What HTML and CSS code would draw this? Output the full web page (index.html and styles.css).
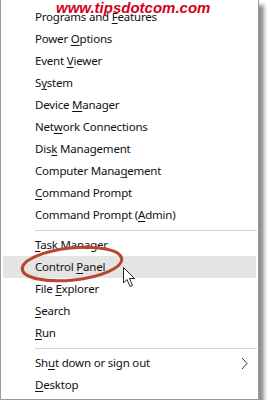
FILE: index.html
```html
<!DOCTYPE html>
<html lang="en">
<head>
  <meta charset="UTF-8">
  <title>Quick Link Menu</title>
  <link rel="stylesheet" href="styles.css">
</head>
<body>

  <div class="menu">
    <div class="item">Programs and <u>F</u>eatures</div>
    <div class="item">Power <u>O</u>ptions</div>
    <div class="item">Event <u>V</u>iewer</div>
    <div class="item">S<u>y</u>stem</div>
    <div class="item">Device <u>M</u>anager</div>
    <div class="item">Net<u>w</u>ork Connections</div>
    <div class="item">Dis<u>k</u> Management</div>
    <div class="item">Computer Mana<u>g</u>ement</div>
    <div class="item"><u>C</u>ommand Prompt</div>
    <div class="item">Command Prompt (<u>A</u>dmin)</div>
    <div class="sep"></div>
    <div class="item"><u>T</u>ask Manager</div>
    <div class="item active">Control <u>P</u>anel</div>
    <div class="item">File <u>E</u>xplorer</div>
    <div class="item"><u>S</u>earch</div>
    <div class="item"><u>R</u>un</div>
    <div class="sep"></div>
    <div class="item sub">
      <span>Sh<u>u</u>t down or sign out</span>
      <svg class="chevron" width="7" height="13" viewBox="0 0 7 13">
        <path d="M1 1 L6 6.5 L1 12" fill="none" stroke="#333" stroke-width="1"/>
      </svg>
    </div>
    <div class="item"><u>D</u>esktop</div>
  </div>

  <div class="watermark">www.tipsdotcom.com</div>

  <svg class="mark" width="275" height="300" viewBox="0 0 275 300">
    <ellipse cx="72" cy="264" rx="50" ry="16" transform="rotate(-6 72 264)"
             fill="none" stroke="#b8472e" stroke-width="3"/>
    <path d="M123.5 267.5 L123.5 283 L127 279.5 L130 286.5 L132.5 285.5 L129.5 278.5 L134.5 278.5 Z"
          fill="#fff" stroke="#222" stroke-width="1" stroke-linejoin="round"/>
  </svg>

</body>
</html>
```

FILE: styles.css
```css
body {
  margin: 0;
  padding: 0;
  background-color: #fff;
  font-family: 'Noto Sans', 'Open Sans', sans-serif;
  font-size: 11.5px;
  letter-spacing: -0.2px;
  color: #111;
}

.menu {
  width: 257px;
  padding: 6px 0 3px 0;
  background-color: #fff;
  border-left: 1px solid #9a9a9a;
  border-right: 1px solid #9a9a9a;
  border-bottom: 1px solid #9a9a9a;
  box-shadow: 5px 5px 4px rgba(0, 0, 0, 0.45);
}

.item {
  height: 22px;
  line-height: 22px;
  padding-left: 34px;
  white-space: nowrap;
}

.item u {
  text-underline-offset: 2px;
}

.item.active {
  background-color: #e4e4e4;
  margin: 0 2px 0 2px;
  padding-left: 32px;
}

.item.sub {
  display: flex;
  align-items: center;
  justify-content: space-between;
  padding-right: 10px;
}

.chevron {
  display: block;
}

.sep {
  height: 1px;
  background-color: #d2d2d2;
  margin: 4px 1px 3px 34px;
}

.watermark {
  position: absolute;
  top: 0;
  left: 56px;
  line-height: 15px;
  font-family: 'Liberation Sans', Arial, sans-serif;
  font-size: 15px;
  font-weight: bold;
  font-style: italic;
  color: #d4001a;
  letter-spacing: 0;
}

.mark {
  position: absolute;
  top: 0;
  left: 0;
  pointer-events: none;
}
```
